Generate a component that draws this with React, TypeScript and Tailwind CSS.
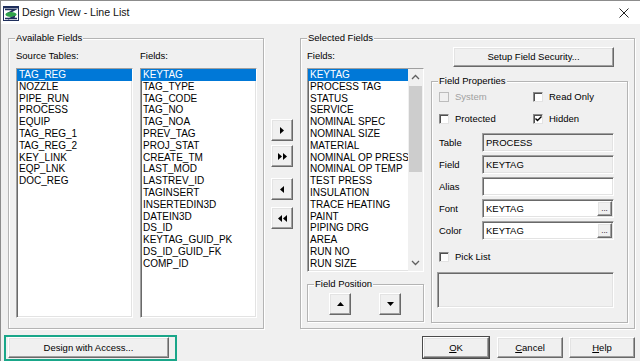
import type { ReactNode } from 'react'
import { clsx } from 'clsx'

const sourceTables = ['TAG_REG', 'NOZZLE', 'PIPE_RUN', 'PROCESS', 'EQUIP', 'TAG_REG_1', 'TAG_REG_2', 'KEY_LINK', 'EQP_LNK', 'DOC_REG']

const tableFields = [
  'KEYTAG', 'TAG_TYPE', 'TAG_CODE', 'TAG_NO', 'TAG_NOA', 'PREV_TAG', 'PROJ_STAT', 'CREATE_TM', 'LAST_MOD',
  'LASTREV_ID', 'TAGINSERT', 'INSERTEDIN3D', 'DATEIN3D', 'DS_ID', 'KEYTAG_GUID_PK', 'DS_ID_GUID_FK', 'COMP_ID',
]

const selectedFields = [
  'KEYTAG', 'PROCESS TAG', 'STATUS', 'SERVICE', 'NOMINAL SPEC', 'NOMINAL SIZE', 'MATERIAL', 'NOMINAL OP PRESS',
  'NOMINAL OP TEMP', 'TEST PRESS', 'INSULATION', 'TRACE HEATING', 'PAINT', 'PIPING DRG', 'AREA', 'RUN NO', 'RUN SIZE',
]

const raised =
  'bg-[#f0f0f0] border border-t-white border-l-white border-r-[#696969] border-b-[#696969] shadow-[inset_-1px_-1px_0_#a0a0a0,inset_1px_1px_0_#e3e3e3]'

const sunken =
  'border border-t-[#a0a0a0] border-l-[#a0a0a0] border-r-white border-b-white shadow-[inset_1px_1px_0_#696969,inset_-1px_-1px_0_#e3e3e3]'

function GroupBox({ title, className, children }: { title: string; className?: string; children: ReactNode }) {
  return (
    <div className={clsx('relative border border-[#b4b4b4] shadow-[inset_1px_1px_0_#fff,1px_1px_0_#fff]', className)}>
      <span className="absolute left-[6px] top-[-7px] bg-[#f0f0f0] px-[1px] leading-[12px]">{title}</span>
      {children}
    </div>
  )
}

function ListItems({ items }: { items: string[] }) {
  return (
    <ul className="text-[10px] leading-[11.8px]">
      {items.map((item, i) => (
        <li key={item} className={clsx('whitespace-nowrap px-[2px]', i === 0 && 'bg-[#0078d7] text-white')}>
          {item}
        </li>
      ))}
    </ul>
  )
}

function Tri({ dir }: { dir: 'right' | 'left' | 'up' | 'down' }) {
  const d = {
    right: 'M0 0 L4 3.5 L0 7 Z',
    left: 'M4 0 L0 3.5 L4 7 Z',
    up: 'M0 4 L3.5 0 L7 4 Z',
    down: 'M0 0 L7 0 L3.5 4 Z',
  }[dir]
  const horizontal = dir === 'right' || dir === 'left'
  return (
    <svg width={horizontal ? 4 : 7} height={horizontal ? 7 : 4} viewBox={horizontal ? '0 0 4 7' : '0 0 7 4'}>
      <path d={d} fill="#000" />
    </svg>
  )
}

function MoveButton({ glyph, double, className }: { glyph: 'right' | 'left'; double?: boolean; className?: string }) {
  return (
    <button type="button" className={clsx(raised, 'flex h-[22px] w-[22px] items-center justify-center gap-[1px]', className)}>
      <Tri dir={glyph} />
      {double && <Tri dir={glyph} />}
    </button>
  )
}

function CheckBox({ label, checked, disabled, className }: { label: string; checked?: boolean; disabled?: boolean; className?: string }) {
  return (
    <div className={clsx('flex h-[12px] items-center gap-[6px] leading-[12px]', className)}>
      <span
        className={clsx(
          'flex h-[10px] w-[10px] items-center justify-center',
          disabled
            ? 'border border-[#bcbcbc] bg-[#f0f0f0]'
            : 'border border-t-[#8a8a8a] border-l-[#8a8a8a] border-r-[#e3e3e3] border-b-[#e3e3e3] bg-white shadow-[inset_1px_1px_0_#505050]',
        )}
      >
        {checked && (
          <svg width="7" height="6" viewBox="0 0 7 6">
            <path d="M0.5 2.5 L2.5 4.5 L6.5 0.5" stroke="#000" strokeWidth="1.4" fill="none" />
          </svg>
        )}
      </span>
      <span className={disabled ? 'text-[#a0a0a0]' : undefined}>{label}</span>
    </div>
  )
}

function PropRow({ label, value, white, browse, className }: { label: string; value?: string; white?: boolean; browse?: boolean; className?: string }) {
  return (
    <div className={clsx('flex items-center', className)}>
      <span className="w-[43px] leading-[12px]">{label}</span>
      <div className={clsx(sunken, 'flex h-[19px] w-[132px] items-center', white ? 'bg-white' : 'bg-[#f0f0f0]')}>
        <span className="flex-1 pl-[3px] leading-[12px]">{value}</span>
        {browse && (
          <span className={clsx(raised, 'mr-[1px] flex h-[15px] w-[15px] items-end justify-center pb-[2px] text-[8px] leading-[8px]')}>
            ...
          </span>
        )}
      </div>
    </div>
  )
}

function Chevron({ up }: { up?: boolean }) {
  return (
    <svg width="9" height="6" viewBox="0 0 9 6">
      <path d={up ? 'M1 5 L4.5 1.5 L8 5' : 'M1 1 L4.5 4.5 L8 1'} stroke="#606060" strokeWidth="1.3" fill="none" />
    </svg>
  )
}

function AppIcon() {
  return (
    <svg width="16" height="15" viewBox="0 0 16 15">
      <rect x="0.5" y="0.5" width="15" height="14" fill="#fff" stroke="#1f2f5c" />
      <path d="M1 1.5 H15 M2 3.5 H12 L4 8" stroke="#1f2f5c" strokeWidth="1.6" fill="none" />
      <ellipse cx="8" cy="8.5" rx="5.5" ry="2.6" fill="#2fa34a" />
      <path d="M2 12.5 H14 M12 10.5 L5 13" stroke="#1f2f5c" strokeWidth="1.6" fill="none" />
    </svg>
  )
}

export default function App() {
  return (
    <div className="flex h-[361px] w-[640px] flex-col overflow-hidden border-l border-t border-[#8c8c8c] bg-[#f0f0f0] font-['Liberation_Sans',Arial,sans-serif] text-[9.5px] text-black">
      <div className="flex h-[23px] shrink-0 items-center bg-white">
        <div className="ml-[2px] mt-[1px]">
          <AppIcon />
        </div>
        <span className="ml-[3px] text-[10.6px] text-[#111]">Design View - Line List</span>
        <svg className="ml-auto mr-[11px]" width="10" height="10" viewBox="0 0 10 10">
          <path d="M0.5 0.5 L9.5 9.5 M9.5 0.5 L0.5 9.5" stroke="#222" strokeWidth="1" />
        </svg>
      </div>

      <div className="flex pt-[14px]">
        <GroupBox title="Available Fields" className="ml-[7px] h-[291px] w-[256px]">
          <div className="flex gap-[7px] pl-[7px] pt-[11px]">
            <div className="w-[117px]">
              <div className="leading-[12px]">Source Tables:</div>
              <div className={clsx(sunken, 'mt-[6px] h-[250px] bg-white')}>
                <ListItems items={sourceTables} />
              </div>
            </div>
            <div className="w-[117px]">
              <div className="leading-[12px]">Fields:</div>
              <div className={clsx(sunken, 'mt-[6px] h-[250px] bg-white')}>
                <ListItems items={tableFields} />
              </div>
            </div>
          </div>
        </GroupBox>

        <div className="ml-[7px] flex w-[22px] flex-col pt-[81px]">
          <MoveButton glyph="right" />
          <MoveButton glyph="right" double className="mt-[4px]" />
          <MoveButton glyph="left" className="mt-[11px]" />
          <MoveButton glyph="left" double className="mt-[7px]" />
        </div>

        <GroupBox title="Selected Fields" className="ml-[7px] h-[291px] w-[335px]">
          <div className="flex items-start pl-[6px]">
            <div className="w-[117px] pt-[11px]">
              <div className="leading-[12px]">Fields:</div>
              <div className={clsx(sunken, 'mt-[6px] flex h-[204px] bg-white')}>
                <div className="flex-1 overflow-hidden">
                  <ListItems items={selectedFields} />
                </div>
                <div className="flex w-[15px] flex-col bg-[#f0f0f0]">
                  <div className="flex h-[16px] items-center justify-center">
                    <Chevron up />
                  </div>
                  <div className="mx-[1px] mt-[1px] h-[86px] bg-[#cdcdcd]" />
                  <div className="flex-1" />
                  <div className="flex h-[16px] items-center justify-center">
                    <Chevron />
                  </div>
                </div>
              </div>
              <GroupBox title="Field Position" className="mt-[12px] h-[38px] w-[117px]">
                <div className="flex gap-[28px] pl-[21px] pt-[8px]">
                  <button type="button" className={clsx(raised, 'flex h-[22px] w-[22px] items-center justify-center')}>
                    <Tri dir="up" />
                  </button>
                  <button type="button" className={clsx(raised, 'flex h-[22px] w-[22px] items-center justify-center')}>
                    <Tri dir="down" />
                  </button>
                </div>
              </GroupBox>
            </div>

            <div className="ml-[7px] w-[197px] pt-[8px]">
              <button type="button" className={clsx(raised, 'ml-[22px] h-[20px] w-[161px] leading-[12px]')}>
                Setup Field Security...
              </button>
              <GroupBox title="Field Properties" className="mt-[14px] h-[242px] w-[197px]">
                <div className="pl-[7px] pt-[9px]">
                  <div className="flex">
                    <CheckBox label="System" disabled className="w-[94px]" />
                    <CheckBox label="Read Only" />
                  </div>
                  <div className="mt-[10px] flex">
                    <CheckBox label="Protected" className="w-[94px]" />
                    <CheckBox label="Hidden" checked />
                  </div>
                  <PropRow label="Table" value="PROCESS" className="mt-[8px]" />
                  <PropRow label="Field" value="KEYTAG" className="mt-[3px]" />
                  <PropRow label="Alias" white className="mt-[3px]" />
                  <PropRow label="Font" value="KEYTAG" white browse className="mt-[3px]" />
                  <PropRow label="Color" value="KEYTAG" white browse className="mt-[3px]" />
                  <CheckBox label="Pick List" className="mt-[11px]" />
                  <div className={clsx(sunken, 'ml-[-2px] mt-[9px] h-[36px] w-[177px] bg-[#f0f0f0]')} />
                </div>
              </GroupBox>
            </div>
          </div>
        </GroupBox>
      </div>

      <div className="mt-[6px] flex items-start">
        <div className="ml-[3px] h-[26px] w-[173px] border-2 border-[#19a689] pl-[2px]">
          <button type="button" className={clsx(raised, 'h-[21px] w-[161px] leading-[12px]')}>
            Design with Access...
          </button>
        </div>
        <button type="button" className={clsx(raised, 'ml-[246px] mt-[2px] h-[21px] w-[66px] leading-[12px] ring-1 ring-[#4a4a4a]')}>
          <span className="underline">O</span>K
        </button>
        <button type="button" className={clsx(raised, 'ml-[8px] mt-[2px] h-[21px] w-[66px] leading-[12px]')}>
          <span className="underline">C</span>ancel
        </button>
        <button type="button" className={clsx(raised, 'ml-[6px] mt-[2px] h-[21px] w-[66px] leading-[12px]')}>
          <span className="underline">H</span>elp
        </button>
      </div>
    </div>
  )
}
